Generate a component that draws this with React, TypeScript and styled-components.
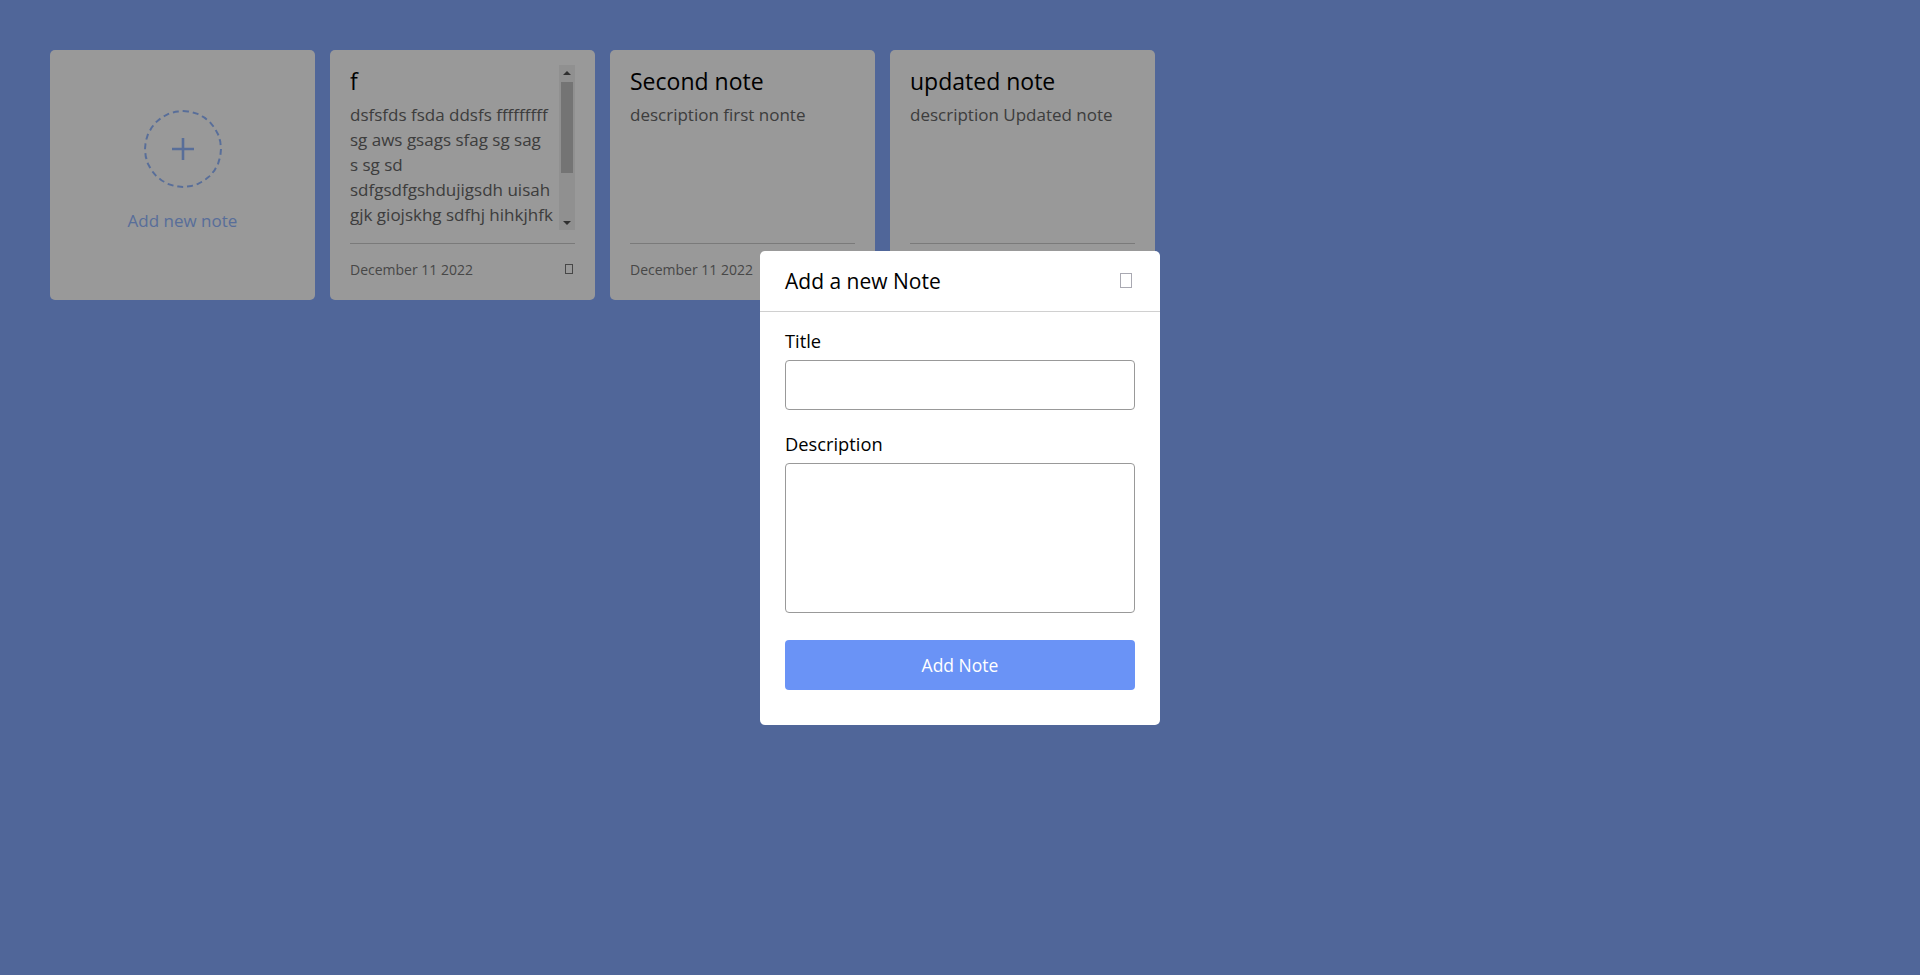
import React from "react";
import styled, { createGlobalStyle } from "styled-components";

const GlobalStyle = createGlobalStyle`
  * { box-sizing: border-box; }
  html, body { margin: 0; padding: 0; }
  body {
    background: #85aaff;
    font-family: "Open Sans", "Noto Sans", sans-serif;
    color: #000;
    min-height: 975px;
  }
`;

const Page = styled.main`
  padding: 50px;
`;

const NotesGrid = styled.div`
  display: grid;
  grid-template-columns: repeat(auto-fill, 265px);
  gap: 15px;
`;

const Card = styled.div`
  height: 250px;
  background: #ffffff;
  border-radius: 5px;
  padding: 15px 20px 20px;
  display: flex;
  flex-direction: column;
`;

const AddCard = styled(Card)`
  align-items: center;
  justify-content: center;
  cursor: pointer;
`;

const PlusCircle = styled.div`
  width: 78px;
  height: 78px;
  border-radius: 50%;
  border: 2px dashed #93b7ff;
  display: flex;
  align-items: center;
  justify-content: center;
  margin-top: -2px;
`;

const AddText = styled.p`
  margin: 21px 0 0;
  font-size: 17px;
  line-height: 24px;
  font-weight: 500;
  color: #93b7ff;
`;

const NoteBody = styled.div`
  flex: 1;
  min-height: 0;
  display: flex;
`;

const NoteContent = styled.div`
  flex: 1;
  min-width: 0;
  overflow: hidden;
`;

/* drawn classic scrollbar (the headless browser hides native ones) */
const ScrollTrack = styled.div`
  width: 16px;
  flex-shrink: 0;
  background: #f1f1f1;
  display: flex;
  flex-direction: column;
`;

const ScrollArrow = styled.div<{ $down?: boolean }>`
  height: 15px;
  display: flex;
  align-items: center;
  justify-content: center;

  &::before {
    content: "";
    width: 0;
    height: 0;
    border-left: 4px solid transparent;
    border-right: 4px solid transparent;
    ${(p) =>
      p.$down ? "border-top: 4px solid #505050;" : "border-bottom: 4px solid #505050;"}
  }
`;

const ScrollRail = styled.div`
  flex: 1;
  padding: 2px;
`;

const ScrollThumb = styled.div`
  background: #c1c1c1;
  height: 91px;
`;

const NoteTitle = styled.h2`
  margin: 0 0 5px;
  font-size: 23px;
  line-height: 32px;
  font-weight: 500;
  color: #000;
`;

const NoteText = styled.p`
  margin: 0;
  font-size: 17px;
  line-height: 25px;
  color: #666;
  white-space: pre-line;
`;

const Footer = styled.div`
  margin-top: 13px;
  border-top: 1px solid #cccccc;
  padding-top: 16px;
  display: flex;
  align-items: center;
  justify-content: space-between;
  flex-shrink: 0;
`;

const DateText = styled.span`
  font-size: 14px;
  line-height: 20px;
  color: #777;
`;

const TrashGlyph = styled.span`
  width: 8px;
  height: 10px;
  border: 1px solid #777;
  margin: -2px 2px 0 0;
`;

const Backdrop = styled.div`
  position: fixed;
  inset: 0;
  background: rgba(0, 0, 0, 0.4);
  display: flex;
  align-items: center;
  justify-content: center;
`;

const Modal = styled.div`
  width: 400px;
  background: #fff;
  border-radius: 5px;
`;

const ModalHeader = styled.div`
  height: 61px;
  padding: 0 25px;
  border-bottom: 1px solid #d0d0d0;
  display: flex;
  align-items: center;
  justify-content: space-between;
`;

const ModalTitle = styled.h3`
  margin: 0;
  font-size: 21px;
  font-weight: 500;
  color: #000;
`;

const CloseGlyph = styled.span`
  width: 12px;
  height: 15px;
  border: 1px solid #a9a9b2;
  margin-right: 3px;
`;

const Form = styled.form`
  padding: 15px 25px 35px;
  display: flex;
  flex-direction: column;
`;

const Field = styled.div`
  display: flex;
  flex-direction: column;
  margin-bottom: 20px;
`;

const Label = styled.label`
  font-size: 18.3px;
  line-height: 27px;
  margin-bottom: 6px;
  color: #000;
`;

const TextInput = styled.input`
  height: 50px;
  border: 1px solid #999;
  border-radius: 4px;
  padding: 0 12px;
  font-family: inherit;
  font-size: 16px;
  outline: none;
`;

const TextArea = styled.textarea`
  height: 150px;
  border: 1px solid #999;
  border-radius: 4px;
  padding: 10px 12px;
  font-family: inherit;
  font-size: 16px;
  resize: none;
  outline: none;
`;

const SubmitButton = styled.button`
  margin-top: 7px;
  height: 50px;
  border: none;
  border-radius: 4px;
  background: #6a93f6;
  color: #fff;
  font-family: inherit;
  font-size: 17.5px;
  cursor: pointer;
`;

const notes = [
  {
    title: "f",
    text:
      "dsfsfds fsda ddsfs fffffffff\nsg aws gsags sfag sg sag\ns sg sd\nsdfgsdfgshdujigsdh uisah\ngjk giojskhg sdfhj hihkjhfk\nsdfhks sdhfk jdsh fkjsd\nhsdkfj hskdjfh ksjdh\nfsd",
    date: "December 11 2022",
    overflow: true,
  },
  { title: "Second note", text: "description first nonte", date: "December 11 2022", overflow: false },
  { title: "updated note", text: "description Updated note", date: "December 11 2022", overflow: false },
];

export default function App() {
  return (
    <>
      <GlobalStyle />
      <Page>
        <NotesGrid>
          <AddCard>
            <PlusCircle>
              <svg width="24" height="24" viewBox="0 0 24 24">
                <path d="M12 1v22M1 12h22" stroke="#93b7ff" strokeWidth="2.6" fill="none" />
              </svg>
            </PlusCircle>
            <AddText>Add new note</AddText>
          </AddCard>
          {notes.map((n, i) => (
            <Card key={i}>
              <NoteBody>
                <NoteContent>
                  <NoteTitle>{n.title}</NoteTitle>
                  <NoteText>{n.text}</NoteText>
                </NoteContent>
                {n.overflow && (
                  <ScrollTrack>
                    <ScrollArrow />
                    <ScrollRail>
                      <ScrollThumb />
                    </ScrollRail>
                    <ScrollArrow $down />
                  </ScrollTrack>
                )}
              </NoteBody>
              <Footer>
                <DateText>{n.date}</DateText>
                <TrashGlyph />
              </Footer>
            </Card>
          ))}
        </NotesGrid>
      </Page>
      <Backdrop>
        <Modal>
          <ModalHeader>
            <ModalTitle>Add a new Note</ModalTitle>
            <CloseGlyph />
          </ModalHeader>
          <Form onSubmit={(e) => e.preventDefault()}>
            <Field>
              <Label>Title</Label>
              <TextInput type="text" />
            </Field>
            <Field>
              <Label>Description</Label>
              <TextArea />
            </Field>
            <SubmitButton type="submit">Add Note</SubmitButton>
          </Form>
        </Modal>
      </Backdrop>
    </>
  );
}
